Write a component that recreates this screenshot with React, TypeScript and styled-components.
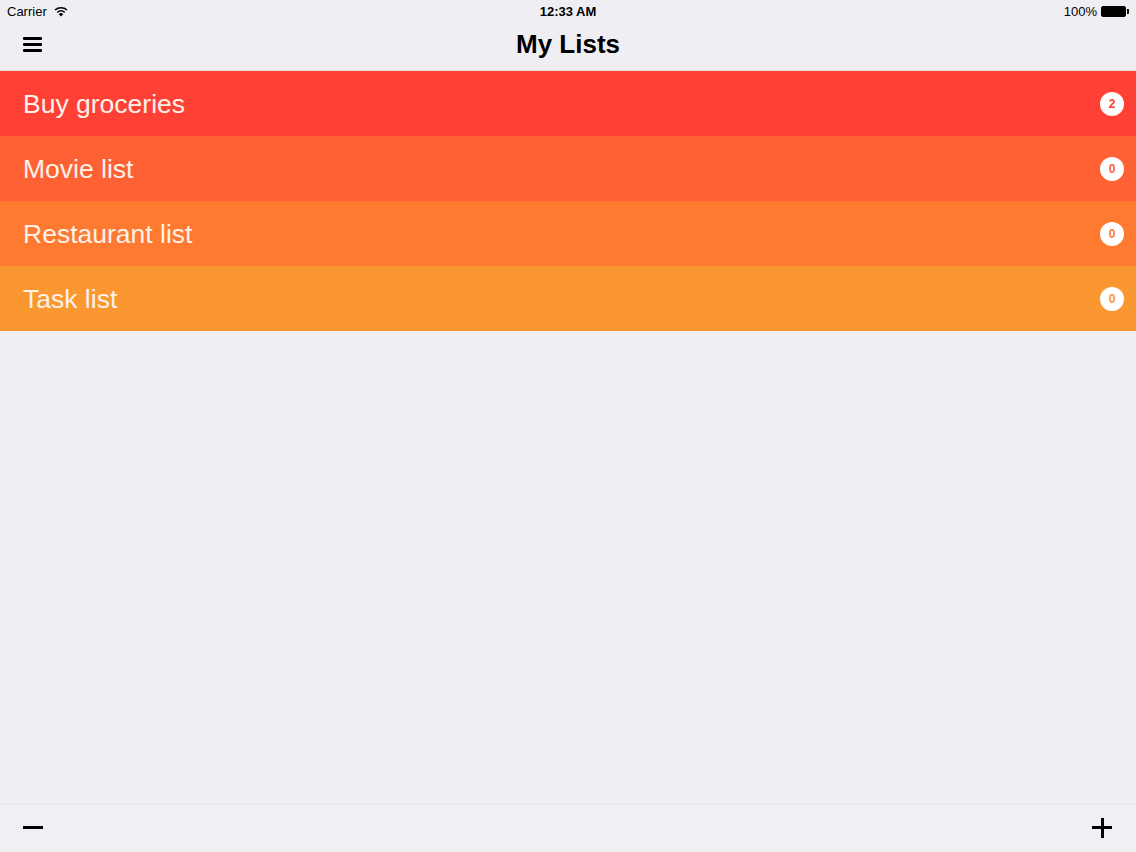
import React from "react";
import styled, { createGlobalStyle } from "styled-components";

const Global = createGlobalStyle`
  html, body { margin: 0; padding: 0; height: 100%; }
  body { background: #efeff3; font-family: "Liberation Sans", Arial, sans-serif; }
  #root { height: 100%; }
`;

const Page = styled.div`
  width: 1136px;
  height: 852px;
  display: flex;
  flex-direction: column;
  background: #efeff3;
  overflow: hidden;
`;

const StatusBar = styled.div`
  height: 22px;
  display: grid;
  grid-template-columns: 1fr auto 1fr;
  align-items: center;
  padding: 0 7px;
  font-size: 13px;
  color: #000;
`;

const StatusLeft = styled.div`
  display: flex;
  align-items: center;
  gap: 7px;
`;

const StatusRight = styled.div`
  display: flex;
  align-items: center;
  justify-content: flex-end;
  gap: 4px;
`;

const Clock = styled.div`
  font-weight: bold;
  font-size: 13px;
`;

const Battery = styled.div`
  position: relative;
  width: 23px;
  height: 9px;
  border: 1px solid #000;
  border-radius: 2px;
  background: #000;
  margin-right: 3px;
  &::after {
    content: "";
    position: absolute;
    right: -4px;
    top: 2px;
    width: 2px;
    height: 5px;
    background: #000;
    border-radius: 0 1px 1px 0;
  }
`;

const NavBar = styled.div`
  height: 48px;
  display: grid;
  grid-template-columns: 1fr auto 1fr;
  align-items: center;
  padding: 0 23px;
  border-bottom: 1px solid #e9dcd4;
`;

const Title = styled.h1`
  margin: 0;
  font-size: 26px;
  font-weight: bold;
  color: #000;
  line-height: 1;
  padding-bottom: 4px;
`;

const MenuButton = styled.div`
  display: flex;
  flex-direction: column;
  gap: 3px;
  width: 19px;
  padding-bottom: 4px;
  span {
    display: block;
    height: 3px;
    background: #000;
    border-radius: 1px;
  }
`;

const List = styled.div`
  display: flex;
  flex-direction: column;
`;

const Row = styled.div<{ $bg: string }>`
  height: 65px;
  background: ${(p) => p.$bg};
  display: flex;
  align-items: center;
  justify-content: space-between;
  padding: 0 12px 0 23px;
`;

const RowLabel = styled.div`
  color: #fdf1ea;
  font-size: 26.5px;
  line-height: 1;
  padding-top: 1px;
`;

const Badge = styled.div<{ $fg: string }>`
  width: 24px;
  height: 24px;
  border-radius: 50%;
  background: #fff;
  color: ${(p) => p.$fg};
  font-size: 12px;
  font-weight: bold;
  display: flex;
  align-items: center;
  justify-content: center;
`;

const Spacer = styled.div`
  flex: 1;
`;

const Toolbar = styled.div`
  height: 47px;
  border-top: 1px solid #e6e6ea;
  background: #f0eff3;
  display: flex;
  align-items: center;
  justify-content: space-between;
  padding: 0 24px 0 23px;
`;

const Minus = styled.div`
  width: 20px;
  height: 3px;
  background: #000;
  margin-top: -2px;
`;

const Plus = styled.div`
  position: relative;
  width: 20px;
  height: 20px;
  margin-top: -2px;
  &::before, &::after {
    content: "";
    position: absolute;
    background: #000;
  }
  &::before { left: 0; top: 8.5px; width: 20px; height: 3px; }
  &::after { top: 0; left: 8.5px; width: 3px; height: 20px; }
`;

const rows = [
  { name: "Buy groceries", count: 2, bg: "#fe4134", fg: "#fe4134" },
  { name: "Movie list", count: 0, bg: "#fe6133", fg: "#fe6133" },
  { name: "Restaurant list", count: 0, bg: "#fe7a30", fg: "#fe7a30" },
  { name: "Task list", count: 0, bg: "#fb9731", fg: "#fb9731" },
];

export default function App() {
  return (
    <Page>
      <Global />
      <StatusBar>
        <StatusLeft>
          <span>Carrier</span>
          <svg width="14" height="11" viewBox="0 0 14 11">
            <path d="M1 4 A9 9 0 0 1 13 4" stroke="#000" strokeWidth="1.6" fill="none" />
            <path d="M3.3 6.3 A5.8 5.8 0 0 1 10.7 6.3" stroke="#000" strokeWidth="1.6" fill="none" />
            <path d="M7 10.5 L4.8 8.3 A3 3 0 0 1 9.2 8.3 Z" fill="#000" />
          </svg>
        </StatusLeft>
        <Clock>12:33 AM</Clock>
        <StatusRight>
          <span>100%</span>
          <Battery />
        </StatusRight>
      </StatusBar>
      <NavBar>
        <MenuButton>
          <span />
          <span />
          <span />
        </MenuButton>
        <Title>My Lists</Title>
        <div />
      </NavBar>
      <List>
        {rows.map((r) => (
          <Row key={r.name} $bg={r.bg}>
            <RowLabel>{r.name}</RowLabel>
            <Badge $fg={r.fg}>{r.count}</Badge>
          </Row>
        ))}
      </List>
      <Spacer />
      <Toolbar>
        <Minus />
        <Plus />
      </Toolbar>
    </Page>
  );
}
